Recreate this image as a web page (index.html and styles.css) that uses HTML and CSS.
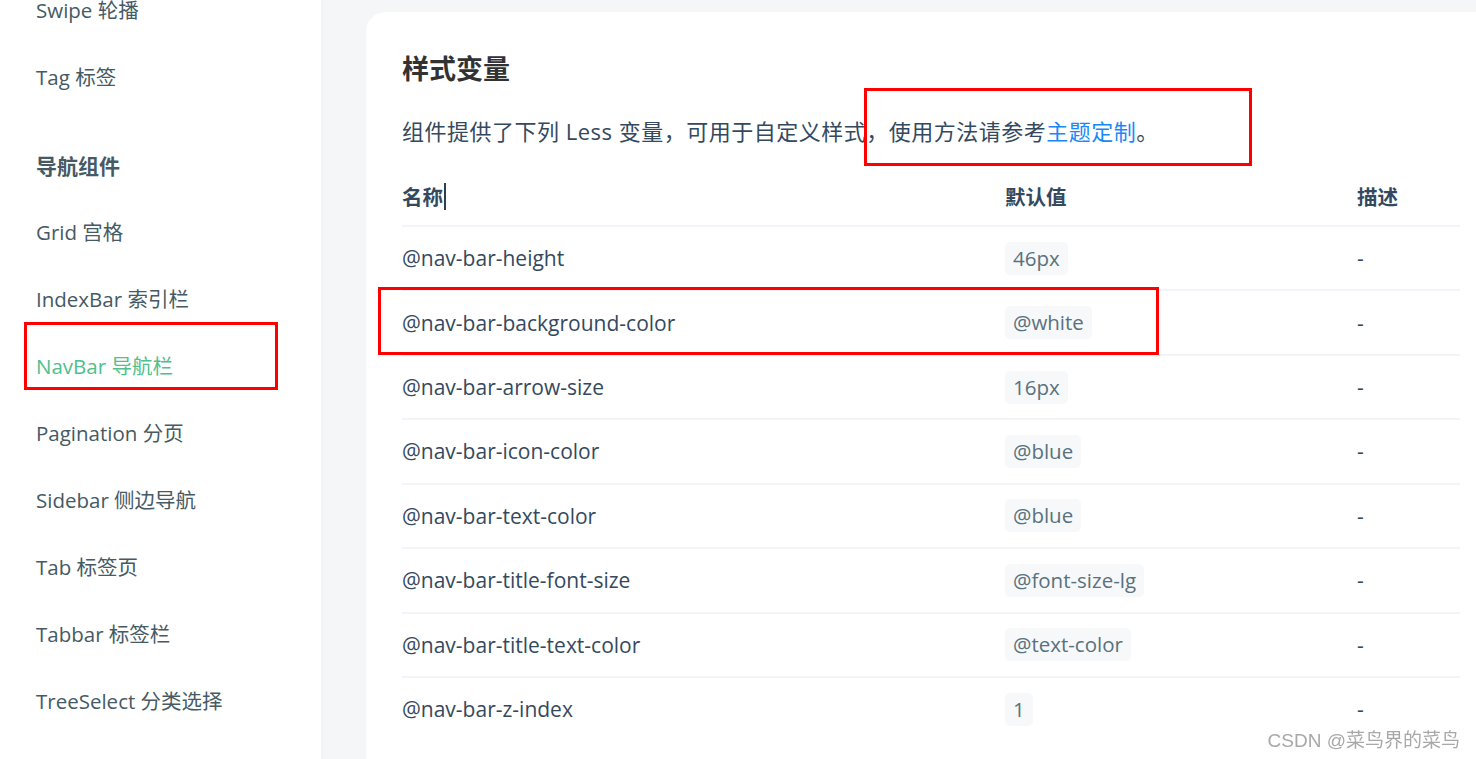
FILE: index.html
```html
<!DOCTYPE html>
<html lang="zh-CN">
<head>
<meta charset="utf-8">
<title>NavBar 导航栏 - 样式变量</title>
<link rel="stylesheet" href="styles.css">
</head>
<body>
<div class="page">
  <aside class="sidebar">
    <nav class="nav">
      <a class="nav-item">Swipe 轮播</a>
      <a class="nav-item">Tag 标签</a>
      <div class="nav-group">导航组件</div>
      <a class="nav-item">Grid 宫格</a>
      <a class="nav-item">IndexBar 索引栏</a>
      <a class="nav-item active">NavBar 导航栏<span class="mark mark-nav"></span></a>
      <a class="nav-item">Pagination 分页</a>
      <a class="nav-item">Sidebar 侧边导航</a>
      <a class="nav-item">Tab 标签页</a>
      <a class="nav-item">Tabbar 标签栏</a>
      <a class="nav-item">TreeSelect 分类选择</a>
    </nav>
  </aside>
  <main class="main">
    <section class="card">
      <h3 class="title">样式变量</h3>
      <p class="desc">组件提供了下列 Less 变量，可用于自定义样式，使用方法请参考<a class="link">主题定制</a>。</p>
      <div class="table">
        <div class="row head">
          <div class="cell">名称<span class="caret"></span></div>
          <div class="cell">默认值</div>
          <div class="cell">描述</div>
        </div>
        <div class="row">
          <div class="cell">@nav-bar-height</div>
          <div class="cell"><code>46px</code></div>
          <div class="cell">-</div>
        </div>
        <div class="row">
          <div class="cell">@nav-bar-background-color</div>
          <div class="cell"><code>@white</code></div>
          <div class="cell">-</div>
        </div>
        <div class="row">
          <div class="cell">@nav-bar-arrow-size</div>
          <div class="cell"><code>16px</code></div>
          <div class="cell">-</div>
        </div>
        <div class="row">
          <div class="cell">@nav-bar-icon-color</div>
          <div class="cell"><code>@blue</code></div>
          <div class="cell">-</div>
        </div>
        <div class="row">
          <div class="cell">@nav-bar-text-color</div>
          <div class="cell"><code>@blue</code></div>
          <div class="cell">-</div>
        </div>
        <div class="row">
          <div class="cell">@nav-bar-title-font-size</div>
          <div class="cell"><code>@font-size-lg</code></div>
          <div class="cell">-</div>
        </div>
        <div class="row">
          <div class="cell">@nav-bar-title-text-color</div>
          <div class="cell"><code>@text-color</code></div>
          <div class="cell">-</div>
        </div>
        <div class="row">
          <div class="cell">@nav-bar-z-index</div>
          <div class="cell"><code>1</code></div>
          <div class="cell">-</div>
        </div>
      </div>
      <span class="mark mark-desc"></span>
      <span class="mark mark-row"></span>
    </section>
  </main>
</div>
<div class="watermark">CSDN @菜鸟界的菜鸟</div>
</body>
</html>
```

FILE: styles.css
```css
html, body {
  margin: 0;
  padding: 0;
  height: 100%;
  overflow: hidden;
}

body {
  font-family: "Open Sans", "Noto Sans CJK SC", sans-serif;
  background: #f5f6f8;
  color: #34495e;
}

.page {
  display: flex;
  height: 759px;
  overflow: hidden;
}

/* ---------- sidebar ---------- */
.sidebar {
  flex: 0 0 321px;
  background: #fff;
  box-shadow: 0 0 8px rgba(0, 0, 0, 0.03);
  position: relative;
  z-index: 1;
}

.nav {
  display: flex;
  flex-direction: column;
  margin-top: -23.5px;
}

.nav-item {
  position: relative;
  display: block;
  height: 67px;
  line-height: 67px;
  padding-left: 36px;
  font-size: 20.5px;
  color: #455a64;
  text-decoration: none;
  white-space: nowrap;
}

.nav-item.active {
  color: #4fc08d;
}

.nav-group {
  margin-top: 22px;
  height: 66px;
  line-height: 66px;
  padding-left: 36px;
  font-size: 21px;
  font-weight: 700;
  color: #455a64;
}

/* ---------- annotation boxes ---------- */
.mark {
  position: absolute;
  box-sizing: border-box;
  border: 3px solid #ff0000;
  pointer-events: none;
}

.mark-nav {
  left: 24px;
  top: -11px;
  width: 254px;
  height: 68px;
}

.mark-desc {
  left: 498px;
  top: 76px;
  width: 388px;
  height: 78px;
}

.mark-row {
  left: 12px;
  top: 275px;
  width: 781px;
  height: 68px;
}

/* ---------- main ---------- */
.main {
  flex: 1;
  overflow: hidden;
  padding: 12px 0 0 45px;
}

.card {
  position: relative;
  width: 1130px;
  box-sizing: border-box;
  background: #fff;
  border-radius: 20px;
  padding: 39px 36px 0 36px;
  min-height: 800px;
}

.title {
  margin: 0;
  font-size: 27px;
  line-height: 36px;
  font-weight: 700;
  color: #323233;
}

.desc {
  margin: 28px 0 0;
  font-size: 22px;
  line-height: 32px;
  letter-spacing: 0.5px;
  color: #34495e;
}

.link {
  color: #1989fa;
  text-decoration: none;
}

/* ---------- table ---------- */
.table {
  margin-top: 20px;
  width: 1058px;
}

.row {
  display: grid;
  grid-template-columns: 603px 352px 1fr;
  align-items: center;
  box-sizing: border-box;
  height: 64.43px;
  border-top: 2px solid #f1f4f8;
  font-size: 21px;
  color: #34495e;
}

.row.head {
  height: 58px;
  border-top: 0;
  font-weight: 700;
  font-size: 20.5px;
  color: #34495e;
}

.cell {
  display: flex;
  align-items: center;
  white-space: nowrap;
}

.caret {
  display: inline-block;
  width: 0;
  height: 27px;
  border-left: 2px solid #2c3e50;
  margin-left: 1px;
}

code {
  display: inline-block;
  font-family: "Open Sans", "Noto Sans CJK SC", sans-serif;
  font-size: 20.5px;
  line-height: 33px;
  padding: 0 8px;
  border-radius: 5px;
  background: #f7f8fa;
  color: #58727e;
}

/* ---------- watermark ---------- */
.watermark {
  position: fixed;
  right: 16px;
  bottom: 7px;
  font-family: "Liberation Sans", "Noto Sans CJK SC", sans-serif;
  font-size: 19px;
  color: #a8a8a8;
  text-shadow: 0 0 2px #fff;
}
```
